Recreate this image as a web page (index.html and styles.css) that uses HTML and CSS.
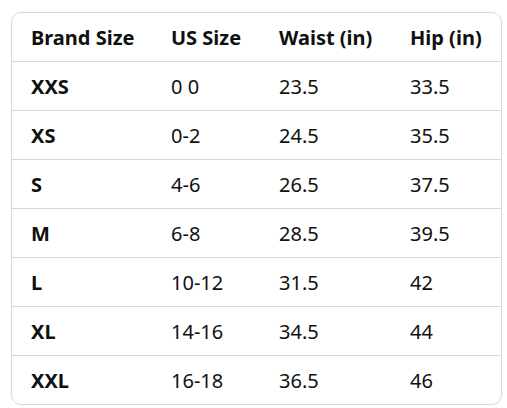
FILE: index.html
```html
<!DOCTYPE html>
<html lang="en">
<head>
    <meta charset="UTF-8">
    <meta name="viewport" content="width=device-width, initial-scale=1.0">
    <title>Size Chart</title>
    <link rel="stylesheet" href="styles.css">
</head>
<body>
    <div class="chart">
        <table class="size-table">
            <thead>
                <tr>
                    <th class="col-brand">Brand Size</th>
                    <th class="col-us">US Size</th>
                    <th class="col-waist">Waist (in)</th>
                    <th class="col-hip">Hip (in)</th>
                </tr>
            </thead>
            <tbody>
                <tr><th>XXS</th><td>0 0</td><td>23.5</td><td>33.5</td></tr>
                <tr><th>XS</th><td>0-2</td><td>24.5</td><td>35.5</td></tr>
                <tr><th>S</th><td>4-6</td><td>26.5</td><td>37.5</td></tr>
                <tr><th>M</th><td>6-8</td><td>28.5</td><td>39.5</td></tr>
                <tr><th>L</th><td>10-12</td><td>31.5</td><td>42</td></tr>
                <tr><th>XL</th><td>14-16</td><td>34.5</td><td>44</td></tr>
                <tr><th>XXL</th><td>16-18</td><td>36.5</td><td>46</td></tr>
            </tbody>
        </table>
    </div>
</body>
</html>
```

FILE: styles.css
```css
body {
    margin: 0;
    padding: 12px 0 0 11px;
    background: #fff;
    font-family: "Noto Sans", "Open Sans", Arial, sans-serif;
    color: #0f1111;
}

.chart {
    width: 489px;
    border: 1px solid #d5d9d9;
    border-radius: 10px;
    overflow: hidden;
}

.size-table {
    width: 100%;
    border-collapse: separate;
    border-spacing: 0;
    table-layout: fixed;
}

.size-table th,
.size-table td {
    box-sizing: border-box;
    height: 48px;
    padding: 0 0 0 19px;
    text-align: left;
    font-size: 20px;
    white-space: nowrap;
    vertical-align: middle;
}

.size-table th {
    font-weight: bold;
}

.size-table td {
    font-weight: normal;
}

.size-table tbody th,
.size-table tbody td {
    height: 49px;
    border-top: 1px solid #d5d9d9;
}

.col-brand { width: 140px; }
.col-us { width: 108px; }
.col-waist { width: 131px; }
.col-hip { width: auto; }
```
